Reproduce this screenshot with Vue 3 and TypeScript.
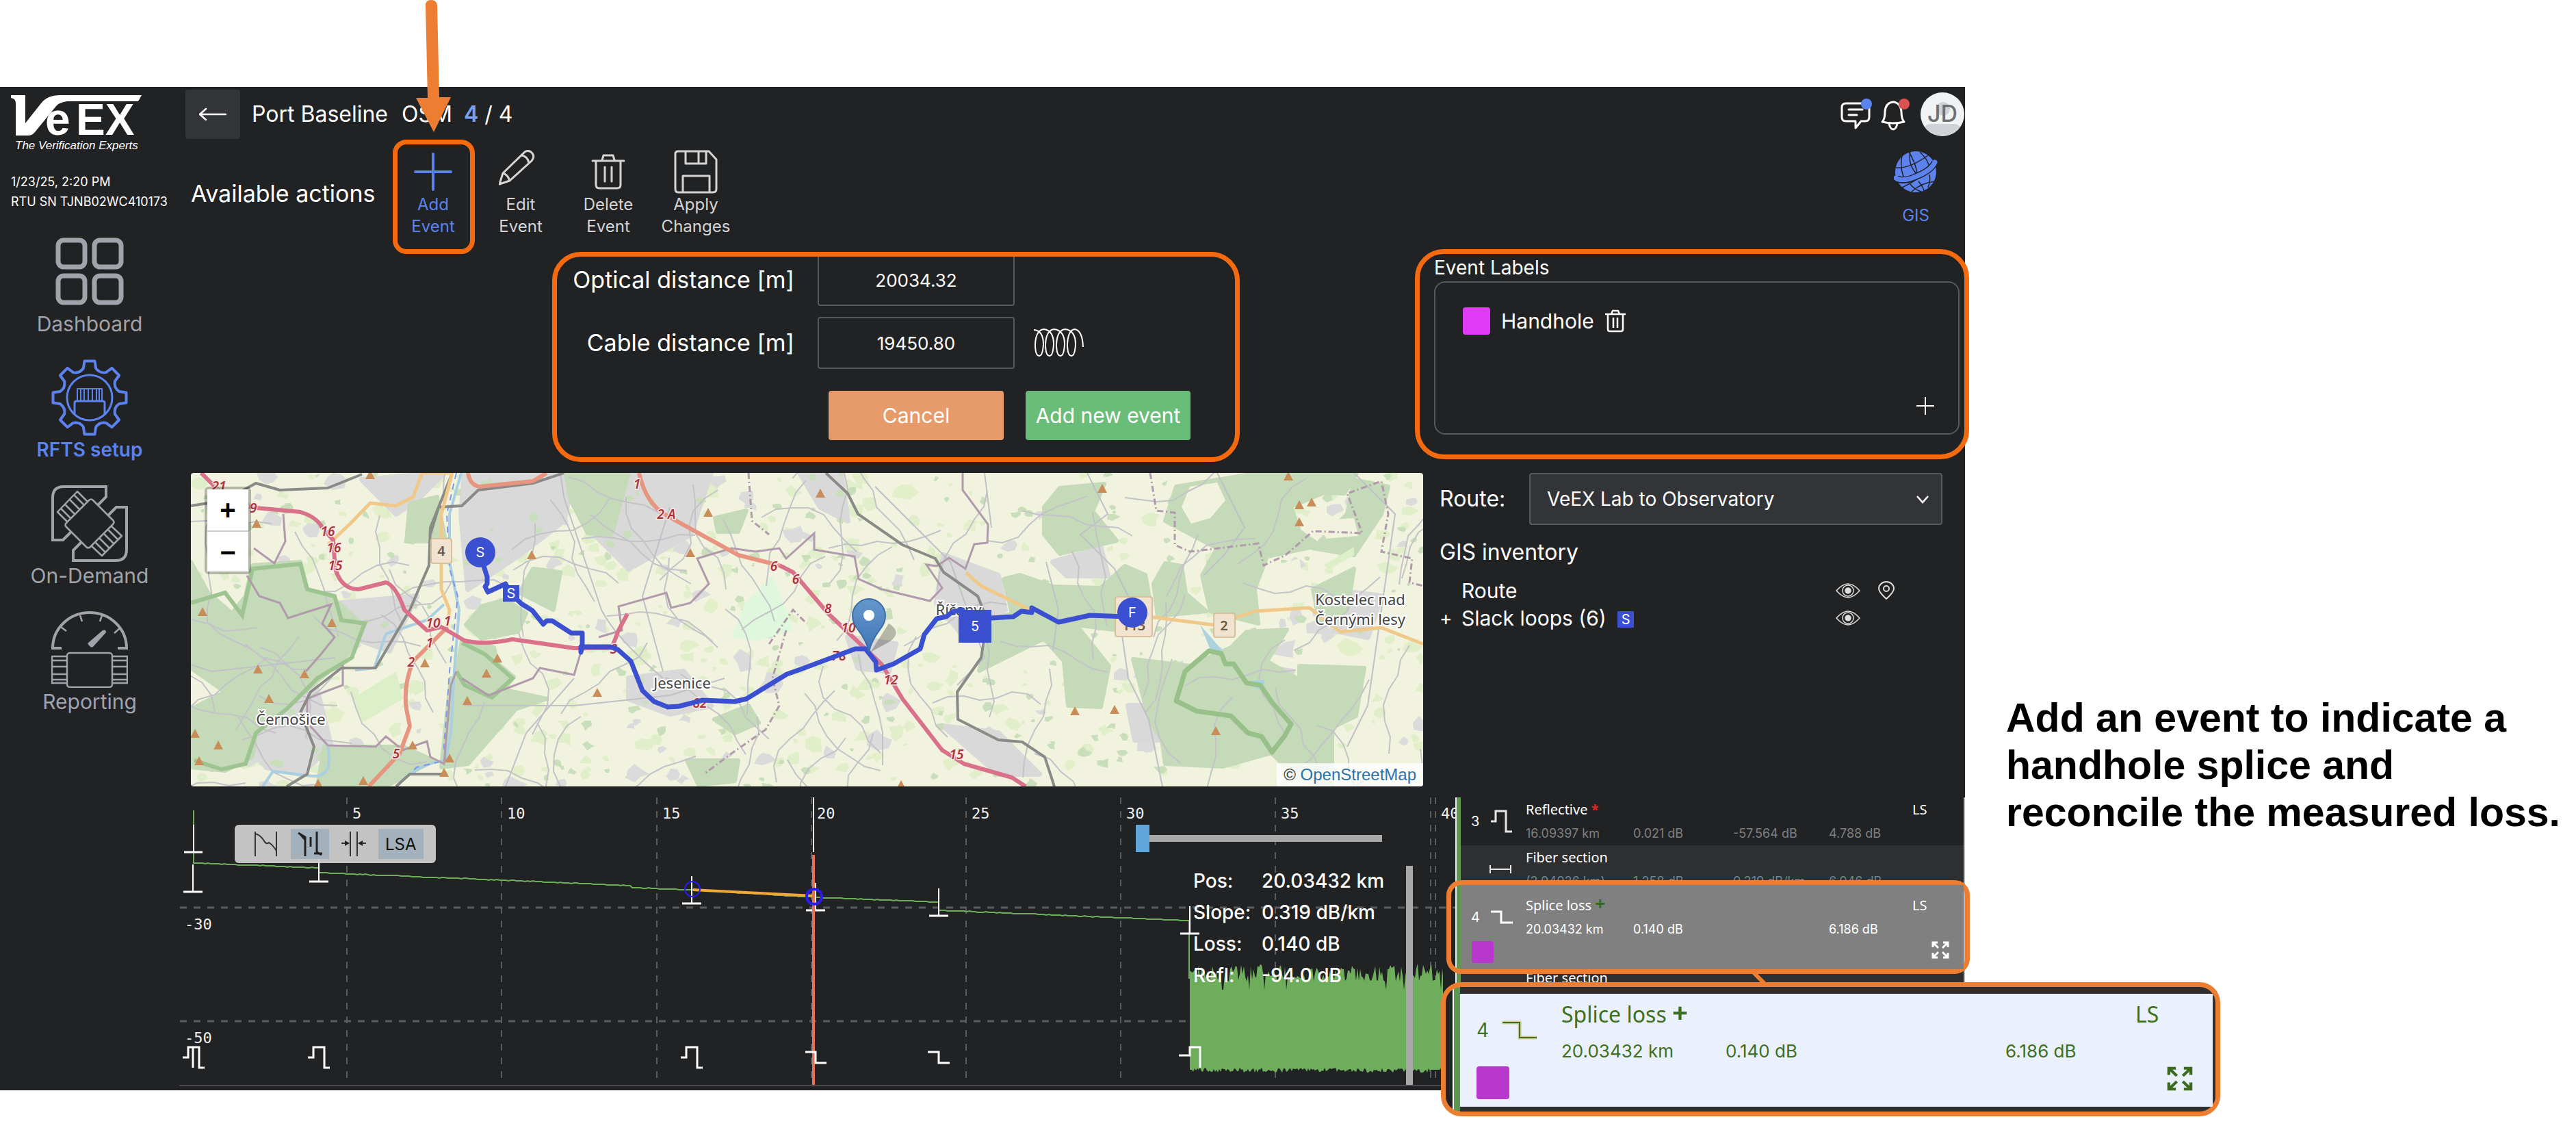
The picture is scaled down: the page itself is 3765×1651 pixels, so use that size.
<script setup lang="ts">
import { ref } from 'vue'

interface Txt { x: number; y: number; t: string }

const optical = ref('20034.32')
const cable = ref('19450.80')
const route = ref('VeEX Lab to Observatory')
const hZoom = ref(0)

/* Small deterministic generator, so that every render draws the same terrain and noise. */
function rng(seed: number) {
  let s = seed
  return () => {
    s = (s * 1664525 + 1013904223) % 4294967296
    return s / 4294967296
  }
}

function blobs(seed: number, count: number, min: number, max: number): string {
  const r = rng(seed)
  let d = ''
  for (let i = 0; i < count; i++) {
    const cx = r() * 1801
    const cy = r() * 458
    const size = min + r() * (max - min)
    const n = 7
    for (let k = 0; k < n; k++) {
      const a = (k / n) * Math.PI * 2
      const rad = size * (0.4 + r() * 0.8)
      d += (k ? 'L' : 'M') + Math.round(cx + Math.cos(a) * rad) + ' ' + Math.round(cy + Math.sin(a) * rad * 0.8)
    }
    d += 'Z'
  }
  return d
}

function lanes(seed: number, count: number): string {
  const r = rng(seed)
  let d = ''
  for (let i = 0; i < count; i++) {
    let x = r() * 1801
    let y = r() * 458
    let a = r() * Math.PI * 2
    d += `M${Math.round(x)} ${Math.round(y)}`
    for (let k = 0; k < 7; k++) {
      a += (r() - 0.5) * 1.1
      x += Math.cos(a) * 24
      y += Math.sin(a) * 24
      d += `L${Math.round(x)} ${Math.round(y)}`
    }
  }
  return d
}

const meadows = blobs(7, 420, 4, 15)
const copses = blobs(21, 260, 3, 10)
const villages = blobs(63, 110, 6, 20)
const lightFields = blobs(88, 60, 6, 20)
const smallRoads = lanes(5, 95)

const roadNumbers: Txt[] = [
  { x: 41, y: 26, t: '21' }, { x: 86, y: 58, t: '19' }, { x: 200, y: 92, t: '16' }, { x: 209, y: 116, t: '16' },
  { x: 211, y: 142, t: '15' }, { x: 354, y: 226, t: '10' }, { x: 375, y: 223, t: '1' }, { x: 349, y: 255, t: '1' },
  { x: 322, y: 283, t: '2' }, { x: 300, y: 417, t: '5' }, { x: 652, y: 23, t: '1' }, { x: 695, y: 67, t: '2 A' },
  { x: 852, y: 143, t: '6' }, { x: 884, y: 162, t: '6' }, { x: 744, y: 343, t: '82' }, { x: 618, y: 264, t: '3' },
  { x: 931, y: 205, t: '8' }, { x: 961, y: 233, t: '10' }, { x: 947, y: 274, t: '78' }, { x: 1023, y: 309, t: '12' },
  { x: 1119, y: 418, t: '15' },
]

const peaks: [number, number][] = [
  [262, 3], [96, 74], [498, 120], [756, 58], [730, 117], [17, 203], [206, 219], [98, 287], [166, 294], [342, 278],
  [448, 271], [432, 293], [114, 330], [404, 333], [594, 321], [6, 381], [40, 398], [12, 421], [324, 398], [378, 417],
  [370, 438], [252, 450], [186, 454], [920, 30], [1332, 23], [1604, 5], [1620, 47], [1638, 43], [1620, 72],
  [1292, 348], [1350, 346], [1498, 377], [1038, 456],
]
const peakPath = peaks.map(([x, y]) => `M${x} ${y - 7}l7 13h-14Z`).join('')

/* Receiver noise after the end of the fibre. */
function noise(): string {
  const r = rng(1234)
  let d = 'M1739 1420'
  for (let x = 1740; x < 2109; x += 2) {
    const v = r()
    const y = v > 0.97 ? 1446 : v < 0.1 ? 1408 + r() * 6 : 1414 + r() * 20
    d += `L${x} ${Math.round(y)}`
  }
  d += 'L2109 1425L2109 1564'
  for (let x = 2108; x > 1740; x -= 2) d += `L${x} ${Math.round(1560 + r() * 7)}`
  return d + 'L1739 1563Z'
}
const noisePath = noise()

function wiggle(pts: [number, number][], seed: number): string {
  const r = rng(seed)
  let d = ''
  for (let i = 0; i < pts.length - 1; i++) {
    const [x0, y0] = pts[i]
    const [x1, y1] = pts[i + 1]
    d += (i ? 'L' : 'M') + `${x0} ${y0}`
    for (let x = x0 + 4; x < x1; x += 4) {
      const y = y0 + ((y1 - y0) * (x - x0)) / (x1 - x0)
      d += `L${x} ${Math.round(y + r() - 0.5)}`
    }
    d += `L${x1} ${y1}`
  }
  return d
}
const traces = [
  wiggle([[284, 1261], [466, 1268]], 1),
  wiggle([[466, 1275], [735, 1286], [921, 1294], [924, 1297], [1012, 1300], [1190, 1311], [1372, 1318]], 2),
  wiggle([[1373, 1330], [1738, 1345]], 3),
]

const gridX: { x: number; label: string }[] = [
  { x: 507, label: '5' }, { x: 733, label: '10' }, { x: 960, label: '15' }, { x: 1186, label: '20' },
  { x: 1412, label: '25' }, { x: 1638, label: '30' }, { x: 1864, label: '35' }, { x: 2091, label: '' }, { x: 2098, label: '40' },
]

function gear(): string {
  const c = 56
  let d = ''
  const pt = (r: number, deg: number) => {
    const a = ((deg - 90) * Math.PI) / 180
    return `${(c + r * Math.cos(a)).toFixed(1)} ${(c + r * Math.sin(a)).toFixed(1)}`
  }
  for (let i = 0; i < 8; i++) {
    const b = i * 45
    d += `${i ? 'L' : 'M'}${pt(54, b - 8)}L${pt(54, b + 8)}L${pt(44, b + 12)}Q${pt(38, b + 22)} ${pt(44, b + 33)}`
  }
  return d + 'Z'
}
const gearPath = gear()

const readout = [
  ['Pos:', '20.03432 km'],
  ['Slope:', '0.319 dB/km'],
  ['Loss:', '0.140 dB'],
  ['Refl:', '-94.0 dB'],
]
</script>

<template>
  <div class="page">
    <div class="app">
      <aside class="side">
        <svg class="logo" viewBox="0 0 204 84" role="img" aria-label="VeEX, The Verification Experts">
          <path fill="#fff" d="M0 2H21V43L44 14Q53 2 72 2H191L186 11H82Q69 12 62 23L35 56Q31 61 25 61H7V14Q7 7 0 6Z" />
          <text x="50" y="60" font-size="66" class="lt">e</text>
          <text x="95" y="60" font-size="64" class="lt">EX</text>
          <text x="6" y="81" font-size="17" class="tag">The Verification Experts</text>
        </svg>
        <p class="stamp">1/23/25, 2:20 PM<br />RTU SN TJNB02WC410173</p>
        <nav>
          <a href="#dashboard">
            <svg viewBox="0 0 112 112" fill="none" stroke="#a2a2aa" stroke-width="7">
              <rect x="10" y="10" width="39" height="39" rx="8" /><rect x="63" y="10" width="39" height="39" rx="8" />
              <rect x="10" y="62" width="39" height="39" rx="8" /><rect x="63" y="62" width="39" height="39" rx="8" />
            </svg>
            <span>Dashboard</span>
          </a>
          <a href="#rfts" class="on">
            <svg viewBox="0 0 112 112" fill="none" stroke="#5c82ee" stroke-width="4" stroke-linejoin="round">
              <path :d="gearPath" />
              <circle cx="56" cy="56" r="33" stroke-width="3" />
              <path stroke-width="2" d="M38 61V43H74V61M43 43V61M48 43V61M54 43V61M60 43V61M66 43V61M70 43V61" />
              <path stroke-width="3" d="M34 80V64Q34 61 37 61H75Q78 61 78 64V80" />
            </svg>
            <span>RFTS setup</span>
          </a>
          <a href="#ondemand">
            <svg viewBox="0 0 112 112" fill="none" stroke="#a2a2aa" stroke-width="4">
              <path d="M29 68L17 80H2V18Q2 2 18 2H80V17L68 29M83 44L95 32H110V94Q110 110 94 110H32V95L44 83" />
              <g stroke-width="2.5" stroke-linejoin="round">
                <path d="M55 22Q58 19 61 22L90 51Q93 54 90 57L57 90Q54 93 51 90L22 61Q19 58 22 55Z" />
                <path d="M24 54L9 39L38 9L53 24M14 34L29 49M20 28L35 43M27 21L42 36M33 14L48 29" />
                <path d="M59 89L74 103L103 74L88 60M64 83L79 98M70 77L85 92M77 71L92 86M83 65L98 80" />
              </g>
            </svg>
            <span>On-Demand</span>
          </a>
          <a href="#reporting">
            <svg viewBox="0 0 112 112" fill="none" stroke="#a2a2aa" stroke-width="4">
              <path d="M15 54H2A54 52 0 0 1 110 54H97" />
              <path stroke-width="2.5" d="M14 23L22 29M42 6L45 15M74 6L71 15M100 25L92 32" />
              <path fill="#a2a2aa" stroke="none" d="M53 47L75 28Q80 26 80 31L61 52Q58 55 53 47Z" />
              <rect x="23" y="61" width="66" height="50" rx="4" stroke-width="2.5" />
              <path stroke-width="2.5" d="M22 66H1V105H22M1 72H22M1 81H22M1 92H22M1 100H22M90 66H111V105H90M90 72H111M90 81H111M90 92H111M90 100H111" />
            </svg>
            <span>Reporting</span>
          </a>
        </nav>
      </aside>

      <main>
        <header>
          <button class="back" aria-label="Back">
            <svg width="40" height="20" viewBox="0 0 40 20" fill="none" stroke="#fff" stroke-width="2.5" stroke-linecap="round" stroke-linejoin="round"><path d="M39 10H1M10 2L1 10L10 18" /></svg>
          </button>
          <h1>Port Baseline</h1>
          <span class="big">OSM</span>
          <span class="big"><b>4</b> / 4</span>
          <div class="user">
            <svg class="chat" viewBox="0 0 46 48" fill="none" stroke="#fff" stroke-width="3" stroke-linejoin="round">
              <path d="M8 8H36Q42 8 42 14V28Q42 34 36 34H30L22 44V34H8Q2 34 2 28V14Q2 8 8 8Z" />
              <path d="M12 17H32M12 25H24" stroke-linecap="round" />
              <circle cx="38" cy="9" r="8" fill="#5c82ee" stroke="none" />
            </svg>
            <svg class="bell" viewBox="0 0 44 48" fill="none" stroke="#fff" stroke-width="3" stroke-linejoin="round">
              <path d="M2 35Q6 31 6 20Q7 7 18 6Q29 7 30 20Q30 31 34 35Q18 39 2 35Z" /><path d="M12 38Q14 46 18 46Q22 46 24 38" />
              <circle cx="34" cy="9" r="8" fill="#d9534f" stroke="none" />
            </svg>
            <svg class="avatar" viewBox="0 0 64 64">
              <circle cx="32" cy="32" r="32" fill="#f1f2f4" />
              <circle cx="33" cy="24" r="10" fill="#cfd2d6" />
              <path fill="#cfd2d6" d="M6 50Q10 46 16 46H48Q54 46 58 50A32 32 0 0 1 6 50Z" />
              <text x="32" y="43" text-anchor="middle" font-size="34" font-weight="500" fill="#6f6f6f">JD</text>
            </svg>
          </div>
        </header>

        <section class="actions">
          <h2>Available actions</h2>
          <button class="act on">
            <svg viewBox="0 0 64 64"><path d="M32 6V58M6 32H58" stroke="#5c82ee" stroke-width="4" stroke-linecap="round" /></svg>
            Add<br />Event
            <i class="ring"></i>
          </button>
          <button class="act">
            <svg viewBox="0 0 64 64" fill="none" stroke="#d4d4d4" stroke-width="3" stroke-linejoin="round">
              <path d="M1 50L6 34L38 3Q44 -1 49 5Q53 10 48 16L16 45Z" /><path d="M6 34Q13 36 16 45M33 8Q42 9 44 19" />
            </svg>
            Edit<br />Event
          </button>
          <button class="act">
            <svg viewBox="0 0 64 64" fill="none" stroke="#d4d4d4" stroke-width="3" stroke-linejoin="round" stroke-linecap="round">
              <path d="M9 16H55M23 15L25 8H39L41 15M14 17V51Q14 56 19 56H45Q50 56 50 51V17M27 25V46M37 25V46" />
            </svg>
            Delete<br />Event
          </button>
          <button class="act">
            <svg viewBox="0 0 64 64" fill="none" stroke="#d4d4d4" stroke-width="3" stroke-linejoin="round">
              <path d="M5 2H51L62 14V57Q62 62 57 62H6Q2 62 2 57V6Q2 2 6 2Z" /><path d="M17 2V20H47V2M36 2V20M13 62V38H52V62" />
            </svg>
            Apply<br />Changes
          </button>
          <button class="act on gis">
            <svg viewBox="0 0 64 64">
              <ellipse cx="32" cy="32" rx="30" ry="30" fill="#5c82ee" />
              <g fill="none" stroke="#212224" stroke-width="1.5">
                <path d="M3 26Q22 28 50 8M12 9Q8 26 16 44M24 2Q20 22 34 36M22 3Q32 20 34 34M38 3Q50 14 52 26M12 55Q30 46 34 42M24 50Q30 58 40 61M36 46Q44 56 44 60M52 36Q54 46 50 55M26 61Q40 48 60 46" />
              </g>
              <path d="M3 40Q6 46 22 43Q54 32 60 18" fill="none" stroke="#212224" stroke-width="10" />
              <path d="M3 41Q8 46 24 42Q54 32 60 18" fill="none" stroke="#5c82ee" stroke-width="7" stroke-linecap="round" />
            </svg>
            <span class="tall">GIS</span>
          </button>
        </section>

        <section class="entry">
          <form @submit.prevent>
            <label for="opt" class="under">Optical distance [m]</label>
            <input id="opt" v-model="optical" type="text" class="under" />
            <span></span>
            <label for="cab">Cable distance [m]</label>
            <input id="cab" v-model="cable" type="text" />
            <svg class="coil" width="74" height="44" viewBox="0 0 74 44" fill="none" stroke="#fff" stroke-width="2">
              <path d="M1 3Q15 4 15 24Q14 41 9 41Q3 41 3 24Q4 3 16 2Q30 4 30 24Q29 41 24 41Q18 41 18 24Q19 3 31 2Q46 4 46 24Q45 41 40 41Q34 41 34 24Q35 3 47 2Q62 4 62 24Q61 41 56 41Q50 41 50 24Q51 3 61 2Q72 4 73 28" />
            </svg>
            <button type="button" class="cancel">Cancel</button>
            <button type="submit" class="add">Add new event</button>
          </form>
          <div class="labels">
            <h3>Event Labels</h3>
            <div class="box">
              <div class="tagline">
                <i class="swatch"></i>
                <span>Handhole</span>
                <button aria-label="Delete label">
                  <svg width="30" height="34" viewBox="0 0 30 34" fill="none" stroke="#fff" stroke-width="2.5" stroke-linejoin="round">
                    <path d="M0 7H30M9 7L11 2H19L21 7M4 8V29Q4 32 7 32H23Q26 32 26 29V8M12 12V27M18 12V27" />
                  </svg>
                </button>
              </div>
              <button class="more" aria-label="Add label">
                <svg width="26" height="26" viewBox="0 0 26 26"><path d="M13 0V26M0 13H26" stroke="#fff" stroke-width="2" /></svg>
              </button>
            </div>
          </div>
        </section>

        <section class="geo">
          <div class="map">
            <svg viewBox="0 0 1801 458">
              <rect width="1801" height="458" fill="#f1f3de" />
              <path :d="lightFields" fill="#e3efc9" />
              <path :d="meadows" fill="#dcecc4" opacity=".8" />
              <path :d="villages" fill="#dbdbdb" />
              <g fill="#d9d9d9" stroke="#d9d9d9" stroke-width="8" stroke-linejoin="round">
                <path d="M400 0H560L545 70L480 120L405 170L395 60ZM620 0H760L730 90L640 140L590 90ZM220 190L330 180L290 260L235 240ZM110 350L180 300L205 400L160 440L110 430L85 400ZM640 300L720 290L760 340L700 352L640 330ZM370 0L250 10L300 60L330 40ZM1100 120L1180 150L1190 200L1130 240L1090 190ZM960 240L1030 250L1020 290L975 285ZM1260 130L1330 110L1340 150L1280 150ZM1370 340L1410 340L1420 390L1380 390ZM1660 170L1740 180L1720 240L1670 230ZM1550 280L1610 290L1600 320L1560 310ZM1100 370L1180 380L1240 440L1180 440ZM890 0H950L960 70L920 50Z" />
              </g>
              <path :d="copses" fill="#c9dfbb" />
              <g fill="#c4dab8" stroke="#c4dab8" stroke-width="6" stroke-linejoin="round">
                <path d="M0 130L25 175L60 205L80 180L90 135L160 130L170 170L210 185L250 220L230 265L190 300L135 345L95 380L90 415L50 435L0 430V345L50 320L0 285Z" />
                <path d="M320 45L360 35L372 100L315 100Z" />
                <path d="M548 0H640L615 90L580 88L555 40Z" />
                <path d="M425 195L460 185L490 205L478 232L425 242L402 222Z" />
                <path d="M396 245L443 255L448 278L472 298L450 325L400 315L388 292Z" />
                <path d="M380 300L520 330L475 345L405 425L366 430Z" />
                <path d="M195 400L310 400L355 420L285 458H185Z" />
                <path d="M766 66L812 55L800 86L770 86Z" />
                <path d="M765 360L815 340L830 365L795 380ZM725 420L800 420L795 450L742 456Z" />
                <path d="M500 140L540 145L530 200L480 175Z" />
                <path d="M1270 22L1335 16L1318 56L1353 99L1270 118L1247 90V50Z" />
                <path d="M1188 155L1212 149L1260 166L1330 168L1365 136L1395 149L1401 182L1353 182L1348 229L1294 222L1342 282L1330 342L1282 340L1276 275L1247 242L1152 289L1164 252L1170 215L1200 205Z" />
                <path d="M1424 132L1448 136L1454 176L1484 202L1413 209L1407 162Z" />
                <path d="M1560 0H1704L1686 30L1656 29L1608 49L1620 85L1650 106L1573 122L1555 169L1560 220L1490 202L1478 150L1500 110L1424 70L1440 20Z" />
                <path d="M1377 272L1460 282L1520 255L1543 232L1602 229L1573 275L1620 302V282L1715 285L1703 355L1668 372V458L1620 449L1579 409L1508 429L1424 425L1419 389L1401 362Z" />
                <path d="M1640 110L1700 120L1740 60L1750 20L1700 10L1690 60ZM1640 170L1700 140L1690 200L1650 220Z" />
              </g>
              <path fill="#f1f3de" d="M1460 20L1500 14L1512 40L1490 66L1462 74L1448 50ZM1640 70L1700 66L1706 92L1660 96ZM1570 140L1620 125L1630 180L1590 190Z" />
              <path fill="#dff8dd" d="M810 190L850 150L870 200L880 230L830 245L790 240Z" />
              <path fill="#dcefc8" d="M235 330L300 290L310 330L250 365ZM1655 135L1700 108L1700 120L1665 140Z" />
              <path :d="smallRoads" fill="none" stroke="#c3c3c8" stroke-width="2" />
              <g fill="none" stroke="#c0c0c8" stroke-width="2">
                <path d="M540 0L545 35L600 200Q620 240 690 300M0 280L30 290L210 270M400 340L560 340L700 325L780 300M1000 20L1110 130L1160 270L1120 310M1250 130L1268 200L1260 260M1310 0L1340 60L1300 90L1350 140L1370 180M1500 0L1540 80L1510 120L1480 150M1360 230L1370 300L1400 360L1420 458M1700 0L1760 60L1740 200L1720 340L1690 400M1170 80L1160 0M700 50L660 180L690 290M460 458L490 380L560 300" />
              </g>
              <g fill="none" stroke="#a9cfe0" stroke-width="4">
                <path d="M395 0L378 60V130L392 200L385 290L380 380L372 420Q330 425 300 458" />
                <path d="M370 192L345 215L285 235L268 285L240 288M200 400Q210 450 170 442L120 436L105 458" />
              </g>
              <path d="M388 0L374 60L378 140L390 180L378 290L370 400L372 420L330 430L300 458" fill="none" stroke="#7d98e8" stroke-width="2" stroke-dasharray="9 7" />
              <path fill="#aad3df" d="M1475 222L1510 262L1490 258ZM1535 305L1570 302L1565 318Z" />
              <path fill="none" stroke="#98c089" stroke-width="7" stroke-linejoin="round" d="M1440 333L1453 290L1488 260L1506 264L1512 279L1524 279L1543 307L1563 310L1580 335L1608 367L1598 385L1580 408L1565 385L1545 380L1520 355L1470 348Z" />
              <g fill="none" stroke="#9ec591" stroke-width="6"><path d="M0 190L50 175L75 208L90 140L160 133L170 170L210 180L220 215L254 220L235 270L185 300L140 345L95 380L80 425L45 433L5 420M396 248L430 265L470 300L440 328L400 310L388 290" /></g>
              <g fill="none" stroke="#b09aac" stroke-width="3">
                <path d="M135 60L138 100L122 132L92 110M82 150L100 180L130 190L142 212L205 192L192 220L210 240L190 265L168 290M222 280V310L195 320L170 330V365L200 398L270 400L285 385L310 405L345 392L350 415L370 425L380 310L388 290M396 300L435 325L500 300L510 285L560 295L572 255M596 240L630 230L625 195L695 175L702 197L730 190L757 162L740 125L790 110L825 115L860 110L870 125L911 88L911 112L970 122L976 155L1010 170L1080 187L1098 168L1075 134L1090 136L1108 124L1132 140L1145 104L1164 102L1165 75L1128 25V0" />
                <path stroke-dasharray="9 4 2 4" d="M815 0L820 70L845 90M845 250L880 200L900 220M1402 0L1411 55L1438 58V105L1460 115L1560 103L1568 135L1600 120L1640 85L1712 88L1690 30L1740 12L1750 60L1740 115L1785 125L1781 160L1801 165M870 230L850 300L860 340L840 375L790 410L750 440" />
              </g>
              <g fill="none" stroke="#8a8a86" stroke-width="4" stroke-linejoin="round">
                <path d="M382 0L350 80L348 135L320 200L270 285L220 285L175 320L160 350L180 400L170 440L140 458M545 0L500 15L420 25L396 48L362 50L350 90M0 48L50 40L95 15L130 25L200 22L250 2M928 0L960 30L975 60L1040 105L1088 125L1100 145L1150 180L1164 215L1155 270L1120 320L1121 360L1180 390L1215 393L1248 415L1262 458M300 458L320 440L370 440" />
              </g>
              <g fill="none" stroke="#f0c98a" stroke-width="5" stroke-linejoin="round">
                <path d="M382 0L366 60V170L378 200L375 225M338 0L325 35L300 48L262 44L232 75L200 105M335 0H380M1133 146L1155 165L1230 202M1400 210L1495 222L1555 202L1635 197L1680 232L1740 226L1801 250" />
              </g>
              <g fill="none" stroke="#e79480" stroke-width="6" stroke-linejoin="round">
                <path d="M655 0Q665 45 695 62L800 120L860 135M405 0Q408 18 422 20L500 12L520 0M375 225L350 250L325 275Q310 310 315 345L320 370L305 410L260 458" />
              </g>
              <g fill="none" stroke="#d9718a" stroke-width="6" stroke-linejoin="round">
                <path d="M15 0L45 30L60 45L95 51L160 57Q185 65 192 80L208 98L211 140Q220 170 245 170L285 160Q300 165 312 200L345 230L366 225L400 245Q430 252 470 243L560 256H615L625 230L638 206M860 135L880 145L931 205L968 240L1010 280L1040 330L1098 405L1130 425L1200 445L1220 458" />
              </g>
              <path :d="peakPath" fill="#c88d58" />
              <g class="shield">
                <rect x="351" y="96" width="30" height="36" rx="3" /><rect x="1495" y="205" width="31" height="35" rx="3" /><rect x="1351" y="181" width="54" height="58" rx="3" />
                <text x="366" y="121">4</text><text x="1510" y="230">2</text><text x="1378" y="230">113</text>
              </g>
              <text v-for="(n, i) in roadNumbers" :key="i" class="num" :x="n.x" :y="n.y">{{ n.t }}</text>
              <g class="town">
                <text x="718" y="315">Jesenice</text>
                <text x="146" y="368">Černošice</text>
                <text x="1122" y="208">Říčany</text>
                <text x="1709" y="193">Kostelec nad</text>
                <text x="1709" y="222">Černými lesy</text>
              </g>
              <path fill="none" stroke="#3b50d0" stroke-width="7" stroke-linejoin="round" d="M428 136L433 152V162L430 166L434 174L460 162L467 176L483 191L499 201L515 221L520 216H528L556 234H572V254L570 262V254H613L624 258L643 275L660 318L677 334L697 342L713 341L748 332L795 334L812 330L871 294L891 287L971 257H986L1001 276L1002 288L1027 279L1066 257L1072 236L1090 213L1104 210L1113 203L1128 200L1131 209L1170 212L1202 210L1214 202L1229 204V197L1268 218L1314 208L1366 210" />
              <defs>
                <linearGradient id="pin" x1="0" y1="0" x2="0" y2="1"><stop offset="0" stop-color="#6597cb" /><stop offset="1" stop-color="#3f74b8" /></linearGradient>
              </defs>
              <path d="M993 262L1020 220Q1040 232 1022 246Z" opacity=".25" />
              <path fill="url(#pin)" stroke="#3a6da8" stroke-width="2" d="M991 262Q988 246 975 229Q967 219 967 209A24 25 0 0 1 1015 209Q1015 219 1007 229Q994 246 991 262Z" />
              <circle cx="991" cy="208" r="8" fill="#fff" />
              <g class="stop">
                <circle cx="423" cy="116" r="22" /><circle cx="1376" cy="204" r="22" />
                <rect x="1122" y="200" width="48" height="48" /><rect x="456" y="164" width="24" height="24" />
                <text x="423" y="123">S</text><text x="1376" y="211">F</text><text x="1146" y="231">5</text><text x="468" y="183">S</text>
              </g>
            </svg>
            <div class="zoom"><button>+</button><button>−</button></div>
            <div class="credit">© <a href="#osm">OpenStreetMap</a></div>
          </div>
          <div class="gisinfo">
            <div class="routerow">
              <label for="route">Route:</label>
              <div class="pick">
                <select id="route" v-model="route"><option>VeEX Lab to Observatory</option></select>
                <svg width="18" height="12" viewBox="0 0 18 12" fill="none" stroke="#fff" stroke-width="2.5"><path d="M1 1L9 10L17 1" /></svg>
              </div>
            </div>
            <h2>GIS inventory</h2>
            <ul>
              <li>
                <span class="plus"></span><span class="name">Route</span>
                <svg class="eye" viewBox="0 0 36 24" fill="none" stroke="#ddd" stroke-width="1.5"><path d="M1 12Q10 2 18 2Q26 2 35 12Q26 22 18 22Q10 22 1 12Z" /><circle cx="18" cy="12" r="8" /><circle cx="18" cy="12" r="4" fill="#ddd" /></svg>
                <svg class="place" viewBox="0 0 24 28" fill="none" stroke="#ddd" stroke-width="2"><path d="M12 26Q1 16 1 11A11 10 0 0 1 23 11Q23 16 12 26Z" /><circle cx="12" cy="11" r="4" /></svg>
              </li>
              <li>
                <span class="plus">+</span><span class="name">Slack loops (6) <b>S</b></span>
                <svg class="eye" viewBox="0 0 36 24" fill="none" stroke="#ddd" stroke-width="1.5"><path d="M1 12Q10 2 18 2Q26 2 35 12Q26 22 18 22Q10 22 1 12Z" /><circle cx="18" cy="12" r="8" /><circle cx="18" cy="12" r="4" fill="#ddd" /></svg>
                <i class="place"></i>
              </li>
            </ul>
          </div>
        </section>

        <section class="otdr">
          <div class="chart">
            <svg viewBox="262 1165 1865 428">
              <g stroke="#5b5c5e" stroke-width="2" stroke-dasharray="10 10">
                <path v-for="g in gridX" :key="g.x" :d="`M${g.x} 1165V1575`" />
                <path d="M263 1326H2127M263 1492H2127" stroke-width="3" />
              </g>
              <path :d="noisePath" fill="#6dad5c" />
              <g class="axis">
                <text v-for="g in gridX" :key="g.x" :x="g.x + 8" y="1196">{{ g.label }}</text>
                <text x="270" y="1358">-30</text><text x="270" y="1524">-50</text>
              </g>
              <g fill="none" stroke="#6dad5c" stroke-width="2">
                <path d="M283 1184V1262M1738 1345V1430M1372 1318V1330" /><path v-for="t in traces" :key="t" :d="t" />
              </g>
              <g fill="none" stroke="#fff" stroke-width="2">
                <path d="M283 1205V1245M282 1263V1303M466 1250V1287M1011 1280V1320M1192 1290V1330M1372 1298V1337M1739 1324V1363M1189 1165V1245" />
                <path stroke-width="3" d="M269 1245H296M268 1303H296M452 1288H480M997 1320H1025M1178 1330H1206M1358 1338H1386M1725 1364H1753" />
                <path d="M267 1545H275V1530H291V1560H299M282 1530V1560M450 1545H458V1530H474V1560H482M995 1545H1003V1530H1019V1560H1027M1356 1537H1372V1553H1388M1723 1542H1739V1530H1754V1560" stroke-width="3" />
              </g>
              <path d="M1013 1300L1190 1309" stroke="#f0a838" stroke-width="4" />
              <path d="M1189 1249V1585" stroke="#e66f55" stroke-width="4" />
              <path d="M1177 1537H1192V1553H1208" fill="none" stroke="#fff" stroke-width="3" />
              <ellipse cx="1012" cy="1299" rx="11" ry="11" fill="none" stroke="#2a1cf0" stroke-width="2" />
              <ellipse cx="1190" cy="1310" rx="11" ry="11" fill="none" stroke="#2a1cf0" stroke-width="4" />
              <rect x="262" y="1585" width="1865" height="2" fill="#48484a" />
            </svg>
            <div class="tools">
              <button aria-label="Slope"><svg width="36" height="36" viewBox="0 0 36 36" fill="none" stroke="#333" stroke-width="2"><path d="M2 0V36M33 0V36M2 3Q8 4 14 12Q18 20 22 16Q28 20 33 28" /></svg></button>
              <button class="set" aria-label="Loss"><svg width="36" height="36" viewBox="0 0 36 36" fill="none" stroke="#222" stroke-width="3"><path d="M1 2L11 8V36M28 0V30L35 34M19 8V22M4 4L11 12M24 32H36" /></svg></button>
              <button aria-label="Cursor"><svg width="36" height="36" viewBox="0 0 36 36" fill="none" stroke="#333" stroke-width="2"><path d="M13 0V36M23 0V36M0 17H10M36 17H26" /><path fill="#222" d="M5 13L12 17L5 21ZM31 13L24 17L31 21Z" stroke="none" /></svg></button>
              <button class="set">LSA</button>
            </div>
            <input v-model="hZoom" class="hslide" type="range" min="0" max="100" aria-label="Horizontal zoom" />
            <input class="vslide" type="range" value="0" aria-label="Vertical zoom" />
            <dl>
              <template v-for="r in readout" :key="r[0]"><dt>{{ r[0] }}</dt><dd>{{ r[1] }}</dd></template>
            </dl>
          </div>

          <div class="events">
            <table>
              <colgroup><col class="c1" /><col class="c2" /><col class="c3" /><col class="c4" /><col class="c5" /><col class="c6" /><col class="c7" /></colgroup>
              <tbody>
                <tr>
                  <td rowspan="2" class="no">3</td>
                  <td rowspan="2"><svg width="34" height="34" viewBox="0 0 34 34" fill="none" stroke="#e6e6e6" stroke-width="3"><path d="M2 17H9V2H24V32H33" /></svg></td>
                  <td colspan="4" class="nm">Reflective <em>*</em></td><td class="nm">LS</td>
                </tr>
                <tr class="v"><td>16.09397 km</td><td>0.021 dB</td><td>-57.564 dB</td><td>4.788 dB</td><td></td></tr>
              </tbody>
              <tbody class="alt">
                <tr>
                  <td rowspan="2"></td>
                  <td rowspan="2"><svg width="32" height="16" viewBox="0 0 32 16" fill="none" stroke="#e6e6e6" stroke-width="2"><path d="M1 2V14M31 2V14M1 8H31" /></svg></td>
                  <td colspan="4" class="nm">Fiber section</td><td></td>
                </tr>
                <tr class="v"><td>(3.94036 km)</td><td>1.258 dB</td><td>0.319 dB/km</td><td>6.046 dB</td><td></td></tr>
              </tbody>
              <tbody class="sel">
                <tr>
                  <td rowspan="2" class="no">4</td>
                  <td rowspan="2"><svg width="34" height="20" viewBox="0 0 34 20" fill="none" stroke="#fff" stroke-width="3"><path d="M2 2H17V18H34" /></svg></td>
                  <td colspan="4" class="nm">Splice loss <b>+</b></td><td class="nm">LS</td>
                </tr>
                <tr class="v"><td>20.03432 km</td><td>0.140 dB</td><td></td><td>6.186 dB</td><td></td></tr>
                <tr class="foot">
                  <td colspan="2"><i class="mark"></i></td><td colspan="4"></td>
                  <td class="exp"><svg width="26" height="26" viewBox="0 0 26 26" fill="none" stroke="#fff" stroke-width="3"><path d="M2 9V2H9M17 2H24V9M24 17V24H17M9 24H2V17M3 3L10 10M23 3L16 10M23 23L16 16M3 23L10 16" /></svg></td>
                </tr>
              </tbody>
              <tbody class="alt">
                <tr><td></td><td></td><td colspan="5" class="nm">Fiber section</td></tr>
              </tbody>
            </table>
            <svg class="link" width="24" height="16" viewBox="0 0 24 16"><path d="M3 0L19 16" stroke="#ed7d31" stroke-width="6" /></svg>
            <div class="loupe">
              <table>
                <colgroup><col class="z1" /><col class="z2" /><col class="z3" /><col class="z4" /><col class="z5" /><col class="z6" /></colgroup>
                <tbody>
                  <tr class="za">
                    <td rowspan="2" class="no">4</td>
                    <td rowspan="2"><svg width="50" height="28" viewBox="0 0 50 28" fill="none"><path d="M0 3H25V25H50" stroke="#d3c58f" stroke-width="5" /><path d="M0 3H25V25H50" stroke="#3f7020" stroke-width="2" /></svg></td>
                    <td colspan="3" class="nm">Splice loss <b>+</b></td><td class="nm">LS</td>
                  </tr>
                  <tr class="zb"><td>20.03432 km</td><td>0.140 dB</td><td>6.186 dB</td><td></td></tr>
                  <tr class="zc">
                    <td colspan="2"><i class="mark"></i></td><td colspan="3"></td>
                    <td class="exp"><svg width="38" height="36" viewBox="0 0 26 26" preserveAspectRatio="none" fill="none" stroke="#3a6b1e" stroke-width="3"><path d="M2 9V2H9M17 2H24V9M24 17V24H17M9 24H2V17M3 3L10 10M23 3L16 10M23 23L16 16M3 23L10 16" /></svg></td>
                  </tr>
                </tbody>
              </table>
            </div>
          </div>
        </section>
      </main>
    </div>
    <p class="note">Add an event to indicate a<br />handhole splice and<br />reconcile the measured loss.</p>
    <svg class="arrow" width="56" height="194" viewBox="0 0 56 194"><path fill="#ed7d31" d="M16 8Q16 0 24 0Q32 0 33 8L36 142H53L28 193L2 143H19Z" /></svg>
  </div>
</template>

<style>
body { margin: 0; background: #fff; }
</style>

<style scoped>
* { box-sizing: border-box; }
.page {
  position: relative;
  display: grid;
  grid-template-columns: 2872fr 893fr;
  align-items: start;
  padding: 127px 0 58px;
  overflow: hidden;
  font-family: Inter, "Noto Sans", sans-serif;
  color: #fff;
}
button { border: 0; padding: 0; background: none; color: inherit; font: inherit; cursor: pointer; }
h1, h2, h3, p, ul, dl, dd { margin: 0; padding: 0; font-weight: 400; }
.app { display: flex; background: #212224; min-width: 0; }
.side { flex: 0 0 262px; min-width: 0; }
.logo { display: block; width: 204px; height: 84px; margin: 10px 0 0 16px; }
.lt { font-family: "Liberation Sans", sans-serif; font-weight: 700; fill: #fff; }
.tag { font-family: "Liberation Sans", sans-serif; font-style: italic; fill: #fff; }
.stamp { margin: 30px 0 0 16px; font-size: 18px; line-height: 29px; white-space: nowrap; }
nav { display: flex; flex-direction: column; gap: 32px; margin-top: 32px; }
nav a { display: flex; flex-direction: column; align-items: center; color: #a2a2aa; text-decoration: none; font-size: 30px; line-height: 40px; }
nav svg { width: 112px; height: 112px; }
nav .on { color: #5c82ee; font-weight: 600; font-size: 28px; }
main { flex: 1; min-width: 0; }

header { display: flex; align-items: center; height: 80px; padding: 0 1px 0 9px; }
.back { display: grid; place-items: center; width: 80px; height: 72px; margin-right: 17px; border-radius: 4px; background: #333437; }
h1, .big, h2 { font-size: 32px; line-height: 48px; white-space: nowrap; }
h1 { margin-right: 20px; }
.big { margin-right: 17px; }
.big b { color: #79a0f2; font-weight: 600; }
.user { display: flex; align-items: center; margin-left: auto; }
.chat { width: 46px; height: 48px; margin-right: 13px; }
.bell { width: 44px; height: 48px; margin-right: 14px; }
.avatar { width: 64px; height: 64px; }

.actions { display: flex; align-items: flex-start; padding: 12px 0 17px 17px; font-size: 24px; line-height: 32px; }
.actions h2 { flex: 0 0 290px; margin-top: 40px; font-size: 34px; }
.act { position: relative; width: 128px; color: #d4d4d4; }
.act svg { display: block; width: 64px; height: 64px; margin: 0 auto; }
.act.on { color: #5c82ee; }
.act.gis { width: 144px; margin-left: auto; }
.tall { display: block; line-height: 64px; }
.ring { position: absolute; inset: -15px 3px -24px 5px; border: 7px solid #f56a0e; border-radius: 20px; }

.entry { position: relative; z-index: 1; display: grid; grid-template-columns: 545fr 1005fr 256fr 810fr; margin-right: -6px; padding-bottom: 16px; }
form {
  grid-column: 2;
  display: grid;
  grid-template-columns: 381fr 288fr 322fr;
  grid-template-rows: 72px 76px 88px;
  row-gap: 16px;
  align-items: end;
  height: 307px;
  margin-top: 4px;
  border: 7px solid #f56a0e;
  border-radius: 42px;
}
form > .under { position: relative; z-index: -1; }
form label { padding-right: 34px; text-align: right; font-size: 34px; line-height: 76px; white-space: nowrap; }
form input { width: 100%; height: 76px; border: 2px solid #58595b; border-radius: 4px; background: none; color: #fff; font: 26px Inter, sans-serif; text-align: center; }
.coil { align-self: center; margin-left: 27px; }
form button { height: 72px; border-radius: 4px; font-size: 30px; }
.cancel { grid-column: 2; margin: 0 16px; background: #e79b6a; }
.add { width: 241px; margin-left: 16px; background: #69bd78; }
.labels { grid-column: 4; height: 307px; border: 7px solid #f56a0e; border-radius: 42px; padding: 0 7px 0 21px; }
h3 { font-size: 28px; line-height: 40px; }
.box { display: flex; flex-direction: column; justify-content: space-between; height: 224px; padding: 36px 35px 27px 40px; border: 2px solid #58595b; border-radius: 16px; }
.tagline { display: flex; align-items: center; gap: 16px; font-size: 30px; line-height: 40px; }
.tagline svg, .more svg { display: block; }
.swatch { width: 40px; height: 40px; border-radius: 4px; background: #df3bf5; }
.more { align-self: flex-end; }

.geo { display: grid; grid-template-columns: 1801fr 792fr; padding: 0 0 16px 17px; }
.map { position: relative; border-radius: 4px; overflow: hidden; align-self: start; }
.map > svg { display: block; width: 100%; height: auto; }
.num { font: italic 600 19px "Noto Sans", sans-serif; fill: #a8343a; text-anchor: middle; stroke: #f8e8e4; stroke-width: 3px; paint-order: stroke; }
.town { font: 22px "Noto Sans", sans-serif; fill: #444; text-anchor: middle; stroke: #fff; stroke-width: 4px; paint-order: stroke; }
.shield rect { fill: #f1e3d0; stroke: #d8c09d; stroke-width: 2px; }
.shield text { font: 600 20px "Noto Sans", sans-serif; fill: #6b5c46; text-anchor: middle; }
.stop { fill: #3b50d0; }
.stop text { font: 20px Inter, sans-serif; fill: #fff; text-anchor: middle; }
.zoom { position: absolute; left: 20px; top: 20px; width: 68px; border: 4px solid rgba(0, 0, 0, .25); border-radius: 6px; background-clip: padding-box; }
.zoom button { display: block; width: 60px; height: 60px; background: #fff; color: #000; font: 700 40px/60px "Liberation Sans", sans-serif; }
.zoom button + button { border-top: 2px solid #ccc; }
.credit { position: absolute; right: 0; bottom: 0; padding: 0 10px; background: rgba(255, 255, 255, .8); color: #333; font: 24px/34px "Liberation Sans", sans-serif; }
.credit a { color: #2f72ab; text-decoration: none; }
.gisinfo { padding: 0 33px 0 24px; }
.routerow { display: flex; }
.routerow label { flex: 0 0 131px; font-size: 32px; line-height: 76px; }
.pick { position: relative; flex: 1; }
select { width: 100%; height: 76px; padding: 0 24px; border: 2px solid #58595b; border-radius: 4px; background: #333437; color: #fff; font: 28px Inter, sans-serif; appearance: none; }
.pick svg { position: absolute; right: 20px; top: 33px; }
.gisinfo h2 { margin: 16px 0 12px; }
li { display: flex; align-items: center; height: 40px; font-size: 30px; }
.plus { width: 32px; font-size: 28px; }
.name { flex: 1; }
.name b { display: inline-block; width: 24px; margin-left: 8px; background: #3b50d0; font-size: 20px; line-height: 24px; font-weight: 400; text-align: center; vertical-align: 2px; }
.eye { width: 36px; height: 24px; margin-right: 26px; }
.place { width: 24px; height: 28px; margin-right: 70px; }

.otdr { display: grid; grid-template-columns: 1865fr 745fr; }
.chart { position: relative; }
.chart > svg { display: block; width: 100%; height: auto; }
.axis { font: 22px "DejaVu Sans Mono", monospace; fill: #f0f0f0; }
.tools { position: absolute; left: 81px; top: 40px; display: flex; align-items: center; gap: 8px; height: 56px; padding: 0 18px; border-radius: 6px; background: rgba(205, 205, 205, .94); }
.tools button { height: 44px; padding: 4px 10px; color: #111; font-size: 24px; }
.tools svg { display: block; }
.tools .set { background: #a3b1bc; }
.hslide { position: absolute; right: 107px; top: 40px; width: 360px; height: 40px; margin: 0; appearance: none; background: none; }
.hslide::-webkit-slider-runnable-track { height: 10px; background: #a9a9a9; }
.hslide::-webkit-slider-thumb { appearance: none; width: 20px; height: 40px; margin-top: -15px; background: #5fa6db; }
.vslide { position: absolute; right: 62px; top: 100px; width: 10px; height: 320px; margin: 0; appearance: none; writing-mode: vertical-lr; background: #a9a9a9; }
.vslide::-webkit-slider-thumb { appearance: none; width: 10px; height: 10px; background: #a9a9a9; }
dl { position: absolute; right: 96px; top: 99px; display: grid; grid-template-columns: 100px 187px; font-size: 28px; line-height: 46px; font-weight: 500; white-space: nowrap; }
dd { font-weight: 500; }

.events { position: relative; border-left: 2px solid #e8ecef; border-right: 2px solid #b9b9bd; }
.events::before { content: ""; position: absolute; inset: 0 auto 0 0; width: 6px; background: #5d9850; }
table { width: 100%; border-collapse: collapse; table-layout: fixed; font-size: 18px; }
.events > table { margin-left: 6px; width: calc(100% - 6px); }
td { padding: 0; white-space: nowrap; }
td svg { display: block; }
.c1 { width: 42px; } .c2 { width: 53px; } .c3 { width: 157px; } .c4 { width: 146px; } .c5 { width: 140px; } .c6 { width: 122px; }
.events > table tr { height: 35px; }
.nm { font-family: "Noto Sans", sans-serif; font-size: 20px; line-height: 24px; }
.no { padding-left: 15px; font-size: 20px; }
.nm em { color: #d9281c; font-style: normal; font-weight: 700; }
.v { color: #7f8081; }
.alt { background: #2e2f30; }
.sel { position: relative; z-index: 1; }
.sel::before, .sel::after { content: ""; position: absolute; z-index: -1; }
.sel::after { inset: -12px 0 -5px 0; background: #808080; }
.sel::before { inset: -19px -9px -12px -21px; border: 7px solid #ed7d31; border-radius: 22px; }
.sel .v { color: #fff; }
.nm b { font-size: 26px; line-height: 20px; }
.sel .nm b { color: #2f6b1a; }
.foot td { height: 36px; vertical-align: top; }
.mark { display: block; width: 32px; height: 32px; margin-left: 16px; border-radius: 4px; background: #b837cc; }
.exp svg { margin-left: 28px; }
.link { position: absolute; left: 431px; top: 256px; }

.loupe {
  position: absolute;
  z-index: 2;
  left: -23px;
  top: 270px;
  width: 1139px;
  padding: 10px 4px 7px 21px;
  border: 7px solid #ed7d31;
  border-radius: 30px;
  background: linear-gradient(90deg, #212224 10px, #fff 10px, #fff 12px, #5d9850 12px, #5d9850 21px, #2e2f30 21px);
  color: #3f7020;
}
.loupe table { background: #eaf1fd; font-size: 26px; }
.z1 { width: 62px; } .z2 { width: 86px; } .z3 { width: 240px; } .z4 { width: 409px; } .z5 { width: 190px; }
.za { height: 60px; }
.zb { height: 46px; }
.zc td { height: 59px; vertical-align: top; }
.loupe .nm { font-size: 32px; line-height: 40px; }
.loupe .nm b { font-size: 40px; line-height: 32px; }
.loupe .no { padding-left: 24px; font-size: 28px; }
.loupe .mark { width: 48px; height: 48px; margin-left: 24px; }
.loupe .exp svg { margin-left: 46px; }

.note { margin: 888px 0 0 60px; color: #000; font: 700 59px/69px "Liberation Sans", sans-serif; white-space: nowrap; }
.arrow { position: absolute; left: 606px; top: 0; z-index: 2; }
</style>
